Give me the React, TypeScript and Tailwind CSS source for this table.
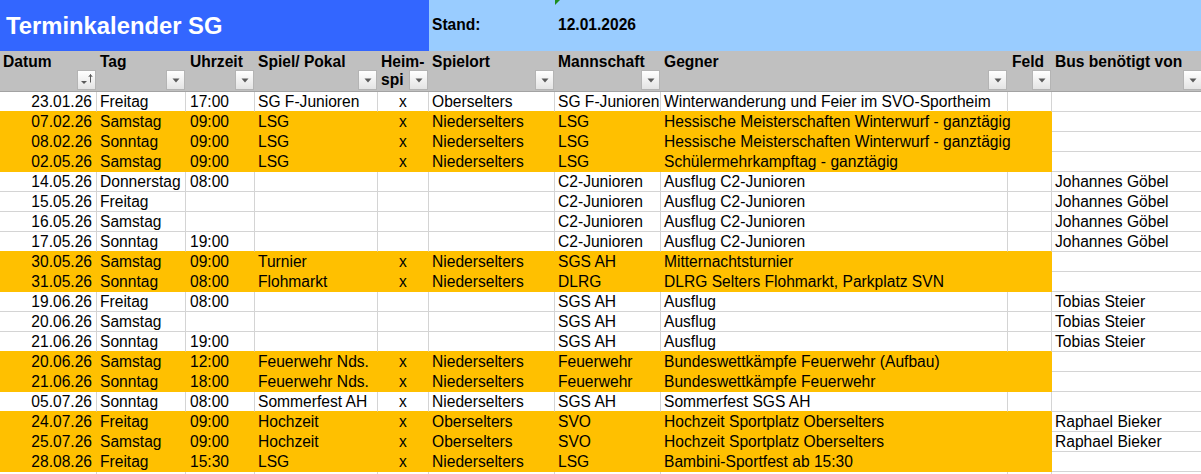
import React from "react";

type Row = {
  d: string; t: string; u: string; s: string; h: string; o: string; m: string; g: string; f: string; b: string; org: boolean;
};

const rows: Row[] = [
  { d: "23.01.26", t: "Freitag", u: "17:00", s: "SG F-Junioren", h: "x", o: "Oberselters", m: "SG F-Junioren", g: "Winterwanderung und Feier im SVO-Sportheim", f: "", b: "", org: false },
  { d: "07.02.26", t: "Samstag", u: "09:00", s: "LSG", h: "x", o: "Niederselters", m: "LSG", g: "Hessische Meisterschaften Winterwurf - ganztägig", f: "", b: "", org: true },
  { d: "08.02.26", t: "Sonntag", u: "09:00", s: "LSG", h: "x", o: "Niederselters", m: "LSG", g: "Hessische Meisterschaften Winterwurf - ganztägig", f: "", b: "", org: true },
  { d: "02.05.26", t: "Samstag", u: "09:00", s: "LSG", h: "x", o: "Niederselters", m: "LSG", g: "Schülermehrkampftag - ganztägig", f: "", b: "", org: true },
  { d: "14.05.26", t: "Donnerstag", u: "08:00", s: "", h: "", o: "", m: "C2-Junioren", g: "Ausflug C2-Junioren", f: "", b: "Johannes Göbel", org: false },
  { d: "15.05.26", t: "Freitag", u: "", s: "", h: "", o: "", m: "C2-Junioren", g: "Ausflug C2-Junioren", f: "", b: "Johannes Göbel", org: false },
  { d: "16.05.26", t: "Samstag", u: "", s: "", h: "", o: "", m: "C2-Junioren", g: "Ausflug C2-Junioren", f: "", b: "Johannes Göbel", org: false },
  { d: "17.05.26", t: "Sonntag", u: "19:00", s: "", h: "", o: "", m: "C2-Junioren", g: "Ausflug C2-Junioren", f: "", b: "Johannes Göbel", org: false },
  { d: "30.05.26", t: "Samstag", u: "09:00", s: "Turnier", h: "x", o: "Niederselters", m: "SGS AH", g: "Mitternachtsturnier", f: "", b: "", org: true },
  { d: "31.05.26", t: "Sonntag", u: "08:00", s: "Flohmarkt", h: "x", o: "Niederselters", m: "DLRG", g: "DLRG Selters Flohmarkt, Parkplatz SVN", f: "", b: "", org: true },
  { d: "19.06.26", t: "Freitag", u: "08:00", s: "", h: "", o: "", m: "SGS AH", g: "Ausflug", f: "", b: "Tobias Steier", org: false },
  { d: "20.06.26", t: "Samstag", u: "", s: "", h: "", o: "", m: "SGS AH", g: "Ausflug", f: "", b: "Tobias Steier", org: false },
  { d: "21.06.26", t: "Sonntag", u: "19:00", s: "", h: "", o: "", m: "SGS AH", g: "Ausflug", f: "", b: "Tobias Steier", org: false },
  { d: "20.06.26", t: "Samstag", u: "12:00", s: "Feuerwehr Nds.", h: "x", o: "Niederselters", m: "Feuerwehr", g: "Bundeswettkämpfe Feuerwehr (Aufbau)", f: "", b: "", org: true },
  { d: "21.06.26", t: "Sonntag", u: "18:00", s: "Feuerwehr Nds.", h: "x", o: "Niederselters", m: "Feuerwehr", g: "Bundeswettkämpfe Feuerwehr", f: "", b: "", org: true },
  { d: "05.07.26", t: "Sonntag", u: "08:00", s: "Sommerfest AH", h: "x", o: "Niederselters", m: "SGS AH", g: "Sommerfest SGS AH", f: "", b: "", org: false },
  { d: "24.07.26", t: "Freitag", u: "09:00", s: "Hochzeit", h: "x", o: "Oberselters", m: "SVO", g: "Hochzeit Sportplatz Oberselters", f: "", b: "Raphael Bieker", org: true },
  { d: "25.07.26", t: "Samstag", u: "09:00", s: "Hochzeit", h: "x", o: "Oberselters", m: "SVO", g: "Hochzeit Sportplatz Oberselters", f: "", b: "Raphael Bieker", org: true },
  { d: "28.08.26", t: "Freitag", u: "15:30", s: "LSG", h: "x", o: "Niederselters", m: "LSG", g: "Bambini-Sportfest ab 15:30", f: "", b: "", org: true },
  { d: "", t: "", u: "", s: "", h: "", o: "", m: "", g: "", f: "", b: "", org: false },
];

const widths = ["w-[97px]", "w-[89px]", "w-[69px]", "w-[123px]", "w-[51px]", "w-[126px]", "w-[106px]", "w-[347px]", "w-[44px]", "w-[151px]"];
const aligns = ["text-right pr-[4px]", "pl-[3px]", "pl-[4px]", "pl-[3px]", "text-center", "pl-[3px]", "pl-[3px]", "pl-[3px] relative z-[1]", "pl-[3px]", "pl-[3px]"];

function FilterBtn({ sort }: { sort?: boolean }) {
  return (
    <div className="absolute right-[1px] bottom-[1px] w-[19px] h-[20px] border border-[#b4b4b4] bg-linear-to-b from-white to-[#e4e4e4] flex items-center justify-center">
      {sort ? (
        <svg width="17" height="18" viewBox="0 0 17 18">
          <path d="M3 10h6l-3 3z" fill="#5a5a5a" />
          <path d="M12.5 3.5v8" stroke="#5a5a5a" strokeWidth="1" />
          <path d="M10.8 6 12.5 3.5 14.2 6" stroke="#5a5a5a" strokeWidth="1" fill="none" />
        </svg>
      ) : (
        <svg width="8" height="5" viewBox="0 0 8 5" className="mt-[1px]">
          <path d="M0.5 0.5h7l-3.5 4z" fill="#5a5a5a" />
        </svg>
      )}
    </div>
  );
}

const headers: { label: React.ReactNode; sort?: boolean }[] = [
  { label: "Datum", sort: true },
  { label: "Tag" },
  { label: "Uhrzeit" },
  { label: "Spiel/ Pokal" },
  { label: <>Heim-<br />spi</> },
  { label: "Spielort" },
  { label: "Mannschaft" },
  { label: "Gegner" },
  { label: "Feld" },
  { label: "Bus benötigt von" },
];
const headerPad = ["pl-[3px]", "pl-[3px]", "pl-[4px]", "pl-[3px]", "pl-[3px]", "pl-[3px]", "pl-[3px]", "pl-[3px]", "pl-[4px]", "pl-[3px]"];

export default function App() {
  return (
    <div
      className="w-[1201px] h-[474px] overflow-hidden bg-white text-black"
      style={{ fontFamily: '"Liberation Sans", Arial, sans-serif' }}
    >
      <div className="flex w-[1203px] h-[51px]">
        <div className="w-[429px] h-full bg-[#3366ff] flex items-center pl-[6px]">
          <span className="text-white font-bold text-[23.8px] leading-none">Terminkalender SG</span>
        </div>
        <div className="flex-1 h-full bg-[#99ccff] flex items-center">
          <div className="w-[126px] pl-[3px] font-bold text-[15.6px] -mt-[1px]">Stand:</div>
          <div className="relative pl-[3px] font-bold text-[15.6px] self-stretch flex items-center -mt-[1px]">
            <svg className="absolute left-0 top-0" width="7" height="7" viewBox="0 0 7 7">
              <path d="M0 0h6L0 6z" fill="#1e8c1e" />
            </svg>
            12.01.2026
          </div>
        </div>
      </div>
      <div className="flex w-[1203px] h-[41px] bg-[#c0c0c0] border-b border-[#a3a3a3]">
        {headers.map((h, i) => (
          <div key={i} className={`relative shrink-0 h-[40px] pt-[2px] ${widths[i]} ${headerPad[i]} font-bold text-[15.6px] leading-[18px] whitespace-nowrap`}>
            {h.label}
            <FilterBtn sort={h.sort} />
          </div>
        ))}
      </div>
      {rows.map((r, ri) => {
        const next = rows[ri + 1];
        const vals = [r.d, r.t, r.u, r.s, r.h, r.o, r.m, r.g, r.f, r.b];
        return (
          <div key={ri} className="flex w-[1203px] h-[20px]">
            {vals.map((v, ci) => {
              let cls: string;
              if (ci < 9) {
                if (r.org) {
                  cls = "bg-[#ffc000] border-r border-b border-[#ffc000]";
                } else {
                  const bottomOrange = next && next.org;
                  cls = `bg-white border-r border-r-[#d4d4d4] border-b ${bottomOrange ? "border-b-[#ffc000]" : "border-b-[#d4d4d4]"}`;
                }
              } else {
                cls = "bg-white border-r border-b border-[#d4d4d4]";
              }
              return (
                <div
                  key={ci}
                  className={`shrink-0 h-[20px] ${widths[ci]} ${cls} ${aligns[ci]} text-[15.6px] leading-[19px] whitespace-nowrap`}
                >
                  {v}
                </div>
              );
            })}
          </div>
        );
      })}
    </div>
  );
}
